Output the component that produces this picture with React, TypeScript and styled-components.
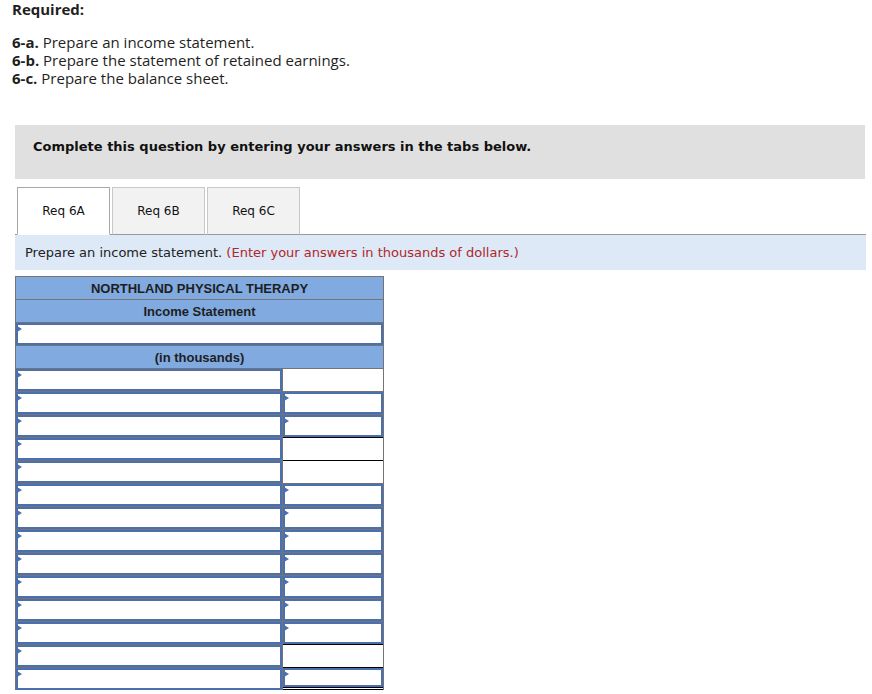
import React from 'react';
import styled, { createGlobalStyle } from 'styled-components';

const GlobalStyle = createGlobalStyle`
  html, body {
    margin: 0;
    padding: 0;
    background: #fff;
  }
  body {
    font-family: 'Open Sans', 'Liberation Sans', sans-serif;
    color: #222;
  }
`;

type RightKind = 'input' | 'plain';

interface DataRow {
  right: RightKind;
  black?: boolean;
  total?: boolean;
}

const rows: DataRow[] = [
  { right: 'plain' },
  { right: 'input' },
  { right: 'input' },
  { right: 'plain', black: true },
  { right: 'plain', black: true },
  { right: 'input' },
  { right: 'input' },
  { right: 'input' },
  { right: 'input' },
  { right: 'input' },
  { right: 'input' },
  { right: 'input' },
  { right: 'plain', black: true },
  { right: 'input', black: true, total: true },
];

export default function App() {
  return (
    <Page>
      <GlobalStyle />
      <Required>
        <Bold>Required:</Bold>
        <Spacer />
        <Line><Bold>6-a.</Bold> Prepare an income statement.</Line>
        <Line><Bold>6-b.</Bold> Prepare the statement of retained earnings.</Line>
        <Line><Bold>6-c.</Bold> Prepare the balance sheet.</Line>
      </Required>

      <Notice>Complete this question by entering your answers in the tabs below.</Notice>

      <Tabs>
        <Tab active>Req 6A</Tab>
        <Tab>Req 6B</Tab>
        <Tab>Req 6C</Tab>
        <TabFill />
      </Tabs>

      <Instruction>
        Prepare an income statement. <Red>(Enter your answers in thousands of dollars.)</Red>
      </Instruction>

      <Sheet>
        <HeadRow>NORTHLAND PHYSICAL THERAPY</HeadRow>
        <HeadRow>Income Statement</HeadRow>
        <FullRow>
          <InputBox />
        </FullRow>
        <HeadRow>(in thousands)</HeadRow>
        {rows.map((r, i) => (
          <Row key={i}>
            <LeftCell>
              <InputBox />
            </LeftCell>
            <RightCell black={r.black} total={r.total}>
              {r.right === 'input' && <InputBox />}
            </RightCell>
          </Row>
        ))}
      </Sheet>
    </Page>
  );
}

function InputBox() {
  return (
    <Field>
      <Marker />
    </Field>
  );
}

const Page = styled.div`
  width: 872px;
  padding-bottom: 20px;
`;

const Required = styled.div`
  padding: 0 0 0 12px;
  font-size: 15px;
  line-height: 18px;
  color: #1f1f1f;
`;

const Bold = styled.span`
  font-weight: 700;
`;

const Spacer = styled.div`
  height: 15px;
`;

const Line = styled.div``;

const Notice = styled.div`
  margin: 38px 7px 0 15px;
  height: 54px;
  box-sizing: border-box;
  background: #e0e0e0;
  padding: 14px 0 0 18px;
  font-family: 'DejaVu Sans', Verdana, sans-serif;
  font-weight: 700;
  font-size: 13px;
  line-height: 16px;
  color: #111;
`;

const Tabs = styled.div`
  display: flex;
  align-items: flex-end;
  gap: 2px;
  margin: 7px 6px 0 17px;
  height: 48px;
`;

const Tab = styled.div<{ active?: boolean }>`
  width: 91px;
  height: 46px;
  display: flex;
  align-items: center;
  justify-content: center;
  border: 1px solid ${(p) => (p.active ? '#a8a8a8' : '#c8c8c8')};
  border-bottom: ${(p) => (p.active ? '1px solid #fff' : '1px solid #999')};
  background: ${(p) => (p.active ? '#fff' : '#f2f2f2')};
  font-family: 'DejaVu Sans', Verdana, sans-serif;
  font-size: 12px;
  color: #111;
  margin-bottom: -1px;
`;

const TabFill = styled.div`
  flex: 1;
  align-self: stretch;
  border-bottom: 1px solid #999;
  margin-bottom: -1px;
`;

const Instruction = styled.div`
  margin: 0 6px 0 15px;
  height: 36px;
  border-top: 1px solid #999;
  box-sizing: border-box;
  background: #dde9f6;
  display: flex;
  align-items: center;
  padding-left: 10px;
  font-family: 'DejaVu Sans', Verdana, sans-serif;
  font-size: 13px;
  color: #222;
  white-space: pre;
`;

const Red = styled.span`
  color: #b0272b;
`;

const Sheet = styled.div`
  margin: 6px 0 0 15px;
  width: 369px;
  box-sizing: border-box;
  border-left: 1px solid #747474;
  border-right: 1px solid #747474;
  font-family: 'Liberation Sans', Arial, sans-serif;
`;

const HeadRow = styled.div`
  height: 23px;
  box-sizing: border-box;
  border-top: 1px solid #747474;
  background: #80aae0;
  display: flex;
  align-items: center;
  justify-content: center;
  font-weight: 700;
  font-size: 13px;
  color: #1e1e1e;
`;

const FullRow = styled.div`
  height: 23px;
  box-sizing: border-box;
  border-top: 1px solid #747474;
  display: flex;
  background: #fff;
`;

const Row = styled.div`
  display: grid;
  grid-template-columns: 267px 1fr;
  height: 23px;
`;

const LeftCell = styled.div`
  border-top: 1px solid #747474;
  border-right: 1px solid #747474;
  display: flex;
`;

const RightCell = styled.div<{ black?: boolean; total?: boolean }>`
  border-top: 1px solid ${(p) => (p.black ? '#000' : '#747474')};
  border-bottom: ${(p) => (p.total ? '3px double #000' : 'none')};
  display: flex;
  background: #fff;
`;

const Field = styled.div`
  position: relative;
  flex: 1;
  border: 2px solid #4a70b0;
  background: #fff;
`;

const Marker = styled.span`
  position: absolute;
  left: -1px;
  top: 1px;
  width: 0;
  height: 0;
  border-top: 3px solid transparent;
  border-bottom: 3px solid transparent;
  border-left: 5px solid #4a70b0;
`;
